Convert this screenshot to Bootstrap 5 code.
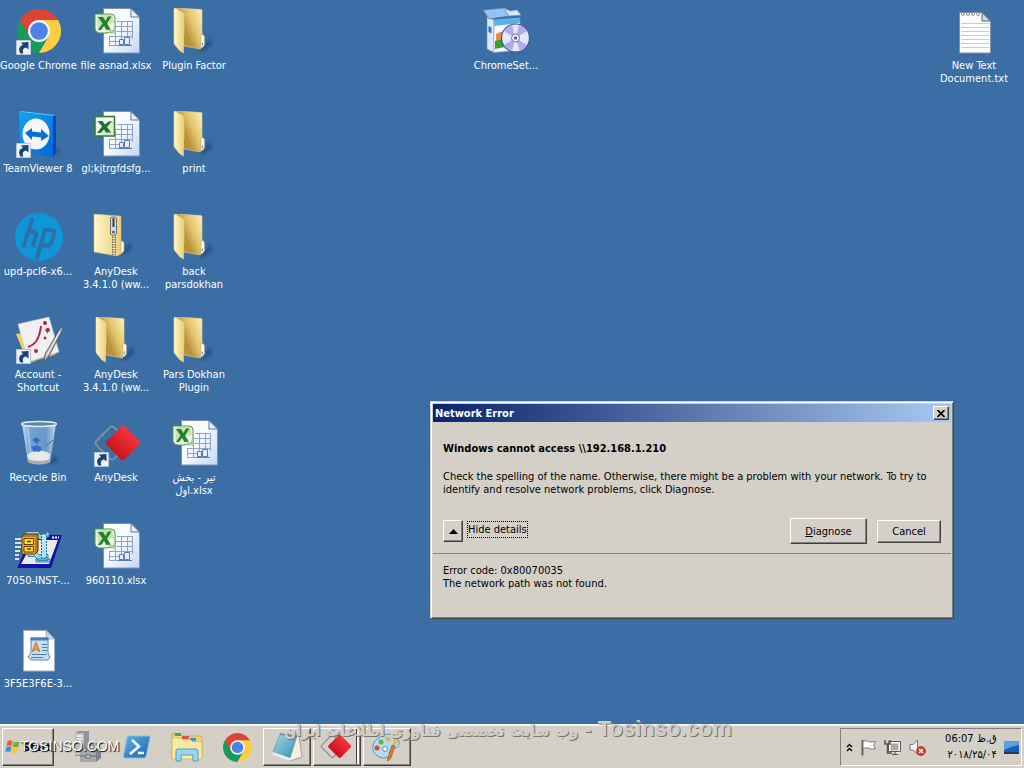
<!DOCTYPE html>
<html lang="en">
<head>
<meta charset="utf-8">
<meta name="viewport" content="width=device-width, initial-scale=1">
<title>Desktop</title>
<link href="https://cdn.jsdelivr.net/npm/bootstrap@5.3.0/dist/css/bootstrap.min.css" rel="stylesheet">
<style>
  :root { --face: #d4d0c8; --dark: #404040; --shade: #808080; }
  body { background: #3b6ea5; color: #000; font-family: "DejaVu Sans Condensed", "DejaVu Sans", sans-serif; font-size: 11px; line-height: 13px; }
  .desktop-area { min-height: 0; }
  .icon-grid { display: grid; grid-template-columns: repeat(13, 76px); grid-auto-rows: 103px; column-gap: 2px; }
  .shortcut { color: #fff; padding-top: 8px; gap: 3px; }
  .shortcut svg, .task svg { overflow: visible; flex: none; }
  .shortcut svg { width: 48px; height: 48px; }
  .shortcut span { max-width: 76px; }
  .c1 { grid-column: 1; } .c2 { grid-column: 2; } .c3 { grid-column: 3; } .c7 { grid-column: 7; } .c13 { grid-column: 13; }
  .r1 { grid-row: 1; } .r2 { grid-row: 2; } .r3 { grid-row: 3; } .r4 { grid-row: 4; } .r5 { grid-row: 5; } .r6 { grid-row: 6; } .r7 { grid-row: 7; }
  .raised { background: var(--face); color: #000; border: 1px solid; border-color: #fff var(--dark) var(--dark) #fff; border-radius: 0; box-shadow: inset -1px -1px 0 var(--shade); padding: 0; font-size: 11px; line-height: 13px; }
  .dialog-window { left: 430px; top: 401px; width: 524px; height: 218px; background: var(--face); border: 1px solid; border-color: var(--face) var(--dark) var(--dark) var(--face); box-shadow: inset 1px 1px 0 #fff, inset -1px -1px 0 var(--shade); padding: 2px; }
  .title-strip { height: 18px; background: linear-gradient(90deg, #0a246a, #a6caf0); color: #fff; padding: 0 2px; }
  .title-strip h1, .message h2 { font-size: 11px; line-height: 13px; }
  .close-btn { width: 16px; height: 14px; }
  .message { padding: 20px 10px 0; }
  .message h2 { margin-bottom: 15px; }
  .actions { height: 26px; margin-top: 22px; }
  .toggle-btn { width: 20px; height: 22px; }
  .link-btn { border: 1px dotted #000; background: none; padding: 0; line-height: 15px; }
  .diagnose { width: 77px; height: 26px; }
  .cancel { width: 64px; height: 23px; margin-left: 10px; }
  .details { border-top: 1px solid var(--shade); margin-top: 9px; padding: 10px; }
  .task-strip { height: 44px; background: var(--face); border-top: 2px solid #f4f2ee; padding: 2px; }
  .start-btn { width: 52px; height: 38px; gap: 2px; font-weight: bold; }
  .pinned { gap: 10px; margin-left: 13px; }
  .task { width: 40px; height: 38px; border: 0; background: none; padding: 0; }
  .running { gap: 2px; margin-left: 6px; }
  .running button { width: 48px; height: 38px; }
  .running .stacked { box-shadow: inset -1px -1px 0 var(--shade), inset -3px 0 0 #fff, inset -4px 0 0 var(--dark); padding-right: 4px; }
  .tray { width: 182px; height: 38px; border: 1px solid; border-color: var(--shade) #fff #fff var(--shade); padding: 0 2px 0 5px; }
  .clock { width: 64px; line-height: 16px; text-align: right; }
  .site-mark { left: 284px; top: -9px; font: bold 22px/24px "Liberation Sans", sans-serif; color: #cfcdc8; text-shadow: 1px 1px 0 #77756f; pointer-events: none; white-space: nowrap; }
  .site-mark bdi { font: bold 16px/24px "DejaVu Sans Condensed", sans-serif; }
  .corner-mark { left: 20px; top: 12px; font: 14px/16px "Liberation Sans", sans-serif; color: #fff; text-shadow: 1px 1px 1px #000; pointer-events: none; }
</style>
</head>
<body class="vh-100 overflow-hidden d-flex flex-column">

<svg width="0" height="0" class="position-absolute" aria-hidden="true">
  <defs>
    <linearGradient id="gFold" x1="0" x2="1"><stop offset="0" stop-color="#fff6c9"/><stop offset="1" stop-color="#e9d078"/></linearGradient>
    <linearGradient id="gBack" gradientUnits="userSpaceOnUse" x1="14" y1="20" x2="33" y2="12"><stop offset="0" stop-color="#b9913a"/><stop offset=".45" stop-color="#e3c46c"/><stop offset="1" stop-color="#f8e7a6"/></linearGradient>
    <linearGradient id="gPage" x1="0" y1="0" x2="1" y2="1"><stop offset="0" stop-color="#fff"/><stop offset=".5" stop-color="#f4f8ff"/><stop offset="1" stop-color="#c3d6f5"/></linearGradient>
    <linearGradient id="gTv" x1="0" x2="1" y2="1"><stop offset="0" stop-color="#12a5f5"/><stop offset="1" stop-color="#0465d8"/></linearGradient>
    <linearGradient id="gRed" y2="1" x2="0"><stop offset="0" stop-color="#f5343a"/><stop offset="1" stop-color="#c8141c"/></linearGradient>
    <linearGradient id="gPs" x2="1" y2="1"><stop offset="0" stop-color="#5fb0e8"/><stop offset="1" stop-color="#1766ae"/></linearGradient>
    <linearGradient id="gTeal" x2="1" y2="1"><stop offset="0" stop-color="#a5dbe8"/><stop offset="1" stop-color="#348fae"/></linearGradient>
    <linearGradient id="gBin" x2="1"><stop offset="0" stop-color="#d3e6f5"/><stop offset=".25" stop-color="#7ba9d6"/><stop offset=".7" stop-color="#6c9bcd"/><stop offset="1" stop-color="#cfe0ed"/></linearGradient>
    <filter id="soft"><feGaussianBlur stdDeviation="1.5"/></filter>

    <symbol id="arrow" viewBox="0 0 15 15"><path d="M.5.5h14v14H.5z" fill="#eef3fa" stroke="#b8c4d4"/><path d="M4.500 13.500C2 10 3 6 7 5L5 2.500 12.500 2v7.500L10 7.500C7 8 6 10.500 7.500 13.500z" fill="#1b4177"/></symbol>

    <symbol id="chrome" viewBox="0 0 44 44">
      <path d="M2.950 11A22 22 0 0 0 22 44L31.530 27.500 22 22z" fill="#139c5a"/>
      <path d="M41.050 11A22 22 0 0 1 22 44L31.530 27.500 22 11z" fill="#ffcd42"/>
      <path d="M2.950 11 12.500 27.500 22 22V11h19.050A22 22 0 0 0 2.950 11z" fill="#db4437"/>
      <circle cx="22" cy="22" r="11" fill="#f6f6f6"/><circle cx="22" cy="22" r="8.800" fill="#4b83e6"/>
    </symbol>

    <symbol id="folder" viewBox="0 0 48 48">
      <path d="M28 44 41 29l1 8-8 6z" fill="#173a66" opacity=".5" filter="url(#soft)"/>
      <path d="M6 0 31 1.500q1 0 1 1V37l-1.500 4L14 38z" fill="url(#gBack)" stroke="#e9d68f" stroke-width=".6"/>
      <path d="M31 26.500h2l1.500 2v8.500l-2 2.500h-2z" fill="#fbf8e6" stroke="#a99b66" stroke-width=".5"/><path d="M31.500 34.500h1.500v3h-1.500z" fill="#6fa7cf"/>
      <path d="M5 0 13 5q1 1 1 3V28l-.5 1V45L10 43 5 37q-1-1-1-2V1q0-1 1-1z" fill="url(#gFold)" stroke="#f1e09c" stroke-width=".5"/>
    </symbol>

    <symbol id="zip" viewBox="0 0 48 48">
      <path d="M24 42 38 28l2 6-8 7z" fill="#173a66" opacity=".5" filter="url(#soft)"/>
      <path d="M2 0 28 2q1 0 1 1V40l-4 2L2 38z" fill="url(#gFold)" stroke="#d9be69" stroke-width=".5"/>
      <path d="M29 27h1.500l1.500 2v8l-2 2.500h-1z" fill="#fbf8e6" stroke="#a99b66" stroke-width=".5"/>
      <path d="M22 20V41" stroke="#6f6850" stroke-width="4" stroke-dasharray="1.500 1"/><path d="M22 20V41" stroke="#f6eec2"/>
      <path d="M18.500 4q3-3 6 0v16q-3 3-6 0z" fill="#d8dde2" stroke="#697078"/><path d="M21.500 4v9" stroke="#333a42" stroke-width="2"/><circle cx="21.500" cy="18" r="1.500" fill="#59616a"/>
    </symbol>

    <symbol id="sheet" viewBox="0 0 48 48">
      <path d="M11.500.5H39L47.500 9V45H11.500z" fill="url(#gPage)" stroke="#7d92b5"/>
      <path d="M39 .5V9h8.500z" fill="#eaf1fb" stroke="#4d6a9a" stroke-width=".9"/>
      <path d="M25 13.500H41M22 18.500H41M18 23.500H41M17 28.500H41M17 33.500H32M17 37.500H31M29.500 13V37M35.500 13V28M40.500 13V31M23.500 20V37M17.500 28V37" fill="none" stroke="#8ba3cb"/>
      <path d="M27.500 31.500h4v5h-4zM32.500 29.500h5v7h-5z" fill="#e8effa" stroke="#5b7db3"/><path d="M26 37.500H40" stroke="#5b7db3"/>
    </symbol>
    <symbol id="excelNew" viewBox="0 0 48 48">
      <use href="#sheet"/>
      <path d="M3 6H19q4 0 4 4V25q-7-1-9 0H7q-4-1-4-4z" fill="#edf6e6" stroke="#519447"/>
      <path d="M5 8q7-2 15-1l2 8q-8 0-16 8z" fill="#c7e2b3"/>
      <path d="M6 9h5l2.500 4 2.500-4.500h3.500l-4.500 7 4 6.500h-4.500l-2.500-4-3 4H6l4.500-6.500z" fill="#24802a"/>
      <path d="M16 22h5v-3l4 4-4 3v-2h-4z" fill="#9bc48a" stroke="#fff" stroke-width=".5"/>
    </symbol>
    <symbol id="excelOld" viewBox="0 0 48 48">
      <use href="#sheet"/>
      <path d="M3 5.500h19.500V25H3z" fill="#d9ecd0" stroke="#3b7a35" stroke-width="1.500"/>
      <path d="M4.500 7h16.500v2L8 23.500H4.500z" fill="#f5faf2"/>
      <path d="M5.500 10h5l2.500 3.500 3.500-3 3.500-.5-5 6 4 5.500h-5l-2-3-3.500 3.500H5l5-6.500z" fill="#1f7228"/>
    </symbol>
    <symbol id="anydesk" viewBox="0 0 48 48">
      <rect x="7.500" y="10.500" width="25" height="25" rx="3" transform="rotate(45 20 23)" fill="none" stroke="#88919b" stroke-width="1.800"/>
      <rect x="18" y="10" width="26" height="26" rx="3" transform="rotate(45 31 23)" fill="url(#gRed)"/>
    </symbol>
  </defs>
</svg>

<main class="desktop-area flex-grow-1 position-relative">
  <nav class="icon-grid" aria-label="Desktop icons">
    <a href="#" class="shortcut c1 r1 d-flex flex-column align-items-center text-center text-decoration-none text-nowrap">
      <svg viewBox="0 0 48 48"><use href="#chrome" x="3" y="1" width="44" height="44"/><use href="#arrow" x="2" y="32" width="15" height="15"/></svg><span>Google Chrome</span></a>
    <a href="#" class="shortcut c2 r1 d-flex flex-column align-items-center text-center text-decoration-none text-nowrap">
      <svg viewBox="0 0 48 48"><use href="#excelNew"/></svg><span>file asnad.xlsx</span></a>
    <a href="#" class="shortcut c3 r1 d-flex flex-column align-items-center text-center text-decoration-none text-nowrap">
      <svg viewBox="0 0 48 48"><use href="#folder"/></svg><span>Plugin Factor</span></a>
    <a href="#" class="shortcut c7 r1 d-flex flex-column align-items-center text-center text-decoration-none text-nowrap">
      <svg viewBox="0 0 48 48">
        <path d="M5 9 12 12V44.500L5 41z" fill="#dfe8f6" stroke="#6a86b0" stroke-width=".6"/><path d="M12 12 38 10V42L12 44.500z" fill="#f8fafe" stroke="#8da5c8" stroke-width=".6"/>
        <path d="M12 12 38 10v5l-26 3z" fill="#56b4e6"/><path d="M6.500 18l3 1.500v6l-3-1.500z" fill="#2a6ed0"/><path d="M14 26l9-4v8l-9 3z" fill="#f08548"/><path d="M13 33l10-3v9l-10 2z" fill="#34a428"/>
        <path d="M1 2 22 0l5 8-20 3z" fill="#98c1f0" stroke="#4f7fbd" stroke-width=".7"/><path d="M22 0l5 8 12-1-4-5-7 1z" fill="#d9e7f9" stroke="#7d9cc5" stroke-width=".7"/>
        <circle cx="33.500" cy="30" r="14" fill="#e6e6f6" stroke="#45558c" stroke-width="1.200"/><path d="M33.500 30 22 23a13 13 0 0 1 8-6zM33.500 30 45 37a13 13 0 0 1-7 6zM33.500 30 37 17a13 13 0 0 1 8 6zM33.500 30 30 43a13 13 0 0 1-8-6z" fill="#b1abec"/>
        <circle cx="33.500" cy="30" r="4" fill="#f5f6fc" stroke="#6b75a9"/><circle cx="33.500" cy="30" r="1.800" fill="#56709a"/>
      </svg><span>ChromeSet...</span></a>
    <a href="#" class="shortcut c13 r1 d-flex flex-column align-items-center text-center text-decoration-none">
      <svg viewBox="0 0 48 48">
        <path d="M9.500 4.500H32L40.500 13V45H9.500z" fill="#fbfcfd" stroke="#8494a8"/><path d="M32 4.500V13h8.500z" fill="#cdd8e5" stroke="#4f6178"/>
        <path d="M11 15.500H39M11 19.500H39M11 23.500H39M11 27.500H39M11 31.500H39M11 35.500H39M11 39.500H39" stroke="#c3cedb"/>
        <g fill="#fff" stroke="#69788b" stroke-width=".8"><circle cx="13" cy="6" r="1.500"/><circle cx="18" cy="6" r="1.500"/><circle cx="23" cy="6" r="1.500"/><circle cx="28" cy="6" r="1.500"/></g>
      </svg><span>New Text Document.txt</span></a>

    <a href="#" class="shortcut c1 r2 d-flex flex-column align-items-center text-center text-decoration-none text-nowrap">
      <svg viewBox="0 0 48 48">
        <path d="M34 46 44 37l2 3-8 6z" fill="#173a66" opacity=".5" filter="url(#soft)"/>
        <path d="M5 1 8 0 42 4V42l-3 4z" fill="#0648b4"/><path d="M5 1 39 5V46L6 41z" fill="url(#gTv)"/><path d="M5 1 8 0 42 4l-3 1z" fill="#57c0fa"/>
        <ellipse cx="22" cy="23" rx="13.500" ry="15.500" fill="#f4f7fb"/>
        <path d="M11 22l7-5v3.500l9 1V18l8 7-8 5v-3.500l-9-1V29z" fill="#0b70d6"/><use href="#arrow" x="2" y="32" width="15" height="15"/>
      </svg><span>TeamViewer 8</span></a>
    <a href="#" class="shortcut c2 r2 d-flex flex-column align-items-center text-center text-decoration-none text-nowrap">
      <svg viewBox="0 0 48 48"><use href="#excelOld"/></svg><span>gl;kjtrgfdsfg...</span></a>
    <a href="#" class="shortcut c3 r2 d-flex flex-column align-items-center text-center text-decoration-none text-nowrap">
      <svg viewBox="0 0 48 48"><use href="#folder"/></svg><span>print</span></a>

    <a href="#" class="shortcut c1 r3 d-flex flex-column align-items-center text-center text-decoration-none text-nowrap">
      <svg viewBox="0 0 48 48"><circle cx="25" cy="23" r="24" fill="#0e96d8"/>
        <path d="M18.500 4 9.500 33M13 17.500h6q4 0 3 4L18.500 33M31.500 14 22.500 46M31 16h6q4 0 3 4l-2.500 8.500q-1 3-4 3h-6" fill="none" stroke="#2f6fa8" stroke-width="4"/></svg><span>upd-pcl6-x6...</span></a>
    <a href="#" class="shortcut c2 r3 d-flex flex-column align-items-center text-center text-decoration-none text-nowrap">
      <svg viewBox="0 0 48 48"><use href="#zip"/></svg><span>AnyDesk<br>3.4.1.0 (ww...</span></a>
    <a href="#" class="shortcut c3 r3 d-flex flex-column align-items-center text-center text-decoration-none">
      <svg viewBox="0 0 48 48"><use href="#folder"/></svg><span>back parsdokhan</span></a>

    <a href="#" class="shortcut c1 r4 d-flex flex-column align-items-center text-center text-decoration-none">
      <svg viewBox="0 0 48 48">
        <path d="M2 17 9 16 22 44l-8 2z" fill="#f0d44c"/><path d="M17 45 41 38l3-4-6-4z" fill="#d9a84a"/>
        <path d="M4 7 35 0 45 35 14 45z" fill="#f0eff2" stroke="#c2c0c8" stroke-width=".6"/>
        <path d="M14 30q11-3 13-21" fill="none" stroke="#b3253a" stroke-width="2"/><g fill="#b3253a"><circle cx="31" cy="6" r="2"/><circle cx="34" cy="13" r="2"/><circle cx="31" cy="21" r="1.500"/><circle cx="22" cy="34" r="2"/><path d="m31 13 2-2 1 6z"/></g>
        <path d="M47 10 49 12 35 39l-5 6 1-8z" fill="#b5b9be" stroke="#474b52" stroke-width=".8"/><path d="M46 14 33 38" stroke="#f7f8f9"/><use href="#arrow" x="2" y="32" width="15" height="15"/>
      </svg><span>Account - Shortcut</span></a>
    <a href="#" class="shortcut c2 r4 d-flex flex-column align-items-center text-center text-decoration-none text-nowrap">
      <svg viewBox="0 0 48 48"><use href="#folder"/></svg><span>AnyDesk<br>3.4.1.0 (ww...</span></a>
    <a href="#" class="shortcut c3 r4 d-flex flex-column align-items-center text-center text-decoration-none">
      <svg viewBox="0 0 48 48"><use href="#folder"/></svg><span>Pars Dokhan Plugin</span></a>

    <a href="#" class="shortcut c1 r5 d-flex flex-column align-items-center text-center text-decoration-none text-nowrap">
      <svg viewBox="0 0 48 48">
        <path d="M34 42 42 35l2 6-8 4z" fill="#173a66" opacity=".5" filter="url(#soft)"/>
        <path d="M8 4H42L36 42q-11 5-22 0z" fill="url(#gBin)" opacity=".9"/><path d="M13 35q5-5 11-3 6-3 12 2l-1 8q-10 4-20 0z" fill="#e9eae8"/><path d="M13.500 39q11 4 23 0L36 42.500q-11 4-22 0z" fill="#a9aeb0"/>
        <path d="m18 20 4-3 4 3-3 4zM17 27l6-2 1 5-4 2zM23 25l5 3-3 4-3-2z" fill="#2e6dd2"/><path d="M14 8 17 36" stroke="#cfe3f4" opacity=".7"/><path d="M32 26l7-6" stroke="#3d6a93"/>
        <ellipse cx="25" cy="4" rx="17.500" ry="2.500" fill="#5b87b0" stroke="#e3eaf0" stroke-width="1.500"/>
      </svg><span>Recycle Bin</span></a>
    <a href="#" class="shortcut c2 r5 d-flex flex-column align-items-center text-center text-decoration-none text-nowrap">
      <svg viewBox="0 0 48 48"><use href="#anydesk"/><use href="#arrow" x="2" y="32" width="15" height="15"/></svg><span>AnyDesk</span></a>
    <a href="#" class="shortcut c3 r5 d-flex flex-column align-items-center text-center text-decoration-none text-nowrap">
      <svg viewBox="0 0 48 48"><use href="#excelNew"/></svg><span dir="ltr">تیر - بخش<br>اول.xlsx</span></a>

    <a href="#" class="shortcut c1 r6 d-flex flex-column align-items-center text-center text-decoration-none text-nowrap">
      <svg viewBox="0 0 48 48">
        <path d="M1 16h7M1 20h7M1 24h6M1 28h5M1 32h4M1 36h4" stroke="#d3e4fb" stroke-width="2"/>
        <path d="M18 12H48L37 45H3z" fill="#1410a8"/><path d="M20 17H44L35 41H7z" fill="#ece9e6"/><path d="M38 14.500h7" stroke="#fff" stroke-width="2" stroke-dasharray="2 1"/>
        <path d="M12 8.500h12l2 3h6V9h3v5h-3v2h-8l-2-4H12zM14 28.500h8l3 3h9v6H24l-3-4h-7zM22 36h14v3H22z" fill="#8fd4f2" stroke="#1d6fa0" stroke-width=".8"/>
        <path d="M27.500 11h5v24h-5z" fill="#b9e3f5" stroke="#1d6fa0" stroke-dasharray="2 1"/>
        <path d="M8 14 11 11H24v17l-3 3H8z" fill="#c47a10" stroke="#5f3403"/><path d="M8.500 14H21v16.500H8.500z" fill="#f2a51e"/><path d="M10 15.500h9.500v6H10zM10 23.500h9.500v5.500H10z" fill="#ffdc38" stroke="#61400a"/><path d="M13 18.500h4M13 26h4" stroke="#5d3c07" stroke-width="1.500"/>
      </svg><span>7050-INST-...</span></a>
    <a href="#" class="shortcut c2 r6 d-flex flex-column align-items-center text-center text-decoration-none text-nowrap">
      <svg viewBox="0 0 48 48"><use href="#excelNew"/></svg><span>960110.xlsx</span></a>

    <a href="#" class="shortcut c1 r7 d-flex flex-column align-items-center text-center text-decoration-none text-nowrap">
      <svg viewBox="0 0 48 48">
        <path d="M9.500 4.500H32L40.500 13V45H9.500z" fill="#fff" stroke="#a4b0c0"/><path d="M32 4.500V13h8.500z" fill="#cbd7e4" stroke="#8fa3ba" stroke-width=".7"/>
        <path d="M17 12H34V27l2 4-2 3H17l-3-3 3-4z" fill="#c4e0f5" stroke="#5b86b1"/><path d="M16.500 11.500H34.500v3H16.500z" fill="#4a7fb3"/>
        <path d="M28 18.500h5M28 21.500h5M28 24.500h5M18 28.500h15M17 31.500h12" stroke="#4f7caf"/><path d="M18.500 26l3.500-8.500L25.500 26M20 23.500h4" fill="none" stroke="#e5802c" stroke-width="2"/>
      </svg><span>3F5E3F6E-3...</span></a>
  </nav>

  <section class="dialog-window position-absolute" role="dialog" aria-labelledby="dlgTitle">
    <header class="title-strip d-flex align-items-center justify-content-between">
      <h1 id="dlgTitle" class="m-0 fw-bold">Network Error</h1>
      <button type="button" class="close-btn raised d-flex align-items-center justify-content-center" aria-label="Close"><svg width="8" height="7" viewBox="0 0 8 7"><path d="M.5 0 7.500 7M7.500 0 .5 7" stroke="#000" stroke-width="1.700"/></svg></button>
    </header>
    <div class="message">
      <h2 class="fw-bold">Windows cannot access \\192.168.1.210</h2>
      <p class="m-0">Check the spelling of the name. Otherwise, there might be a problem with your network. To try to<br>identify and resolve network problems, click Diagnose.</p>
      <div class="actions d-flex align-items-center">
        <button type="button" class="toggle-btn raised d-flex align-items-center justify-content-center" aria-label="Collapse"><svg width="9" height="5" viewBox="0 0 9 5"><path d="M4.500 0 9 5H0z"/></svg></button>
        <button type="button" class="link-btn ms-1 mb-1">Hide details</button>
        <button type="button" class="diagnose raised ms-auto"><u>D</u>iagnose</button>
        <button type="button" class="cancel raised">Cancel</button>
      </div>
    </div>
    <div class="details">Error code: 0x80070035<br>The network path was not found.</div>
  </section>
</main>

<footer class="task-strip position-relative d-flex align-items-center flex-shrink-0">
  <button type="button" class="start-btn raised d-flex align-items-center justify-content-center">
    <svg width="16" height="16" viewBox="0 0 16 16"><path d="M2.500 2Q5 .5 7.500 2L6.500 7Q4 6 1.500 7z" fill="#e8622c"/><path d="M8.500 2.500Q11 4 14.500 2.500L13.500 7.500Q10.500 9 7.500 7.500z" fill="#6db33f"/><path d="M1.300 8Q4 7 6.300 8L5.300 13Q3 12 .3 13z" fill="#3b8ede"/><path d="M7.300 8.500Q10 10 13.300 8.500L12 13.500Q9 15 6.300 13.500z" fill="#f8c62d"/></svg>Start</button>

  <div class="pinned d-flex">
    <button type="button" class="task" aria-label="Server Manager"><svg width="32" height="32" viewBox="0 0 32 32">
      <path d="M4 2 8 0h10v23l-4 2H4z" fill="#8e9499"/><path d="M4 2h9v22H4z" fill="#b8bdc1"/><path d="M5.500 5h6M5.500 8h6M5.500 11h6" stroke="#f5f6f7" stroke-width="1.500"/>
      <path d="M9 20 14 17h16v10l-5 4H9z" fill="#7b8288"/><path d="M9 20h16v11H9z" fill="#a3aab0"/><path d="M9 25h16" stroke="#656b71"/><path d="M16 17v-3h7v3M15 24h4v3h-4z" fill="#dadddf" stroke="#666d73"/></svg></button>
    <button type="button" class="task" aria-label="PowerShell"><svg width="28" height="24" viewBox="0 0 28 24">
      <path d="M6 1H26q1.500 0 1 2L23 21q-.5 2-2 2H2q-2 0-1.500-2L4 3q.5-2 2-2z" fill="url(#gPs)" stroke="#8bbbe0"/><path d="M9 5l7 6.500L7 19M15 18h6" fill="none" stroke="#fff" stroke-width="2.500"/></svg></button>
    <button type="button" class="task" aria-label="Explorer"><svg width="32" height="30" viewBox="0 0 32 30">
      <path d="M1 2h8l2 2h18q2 0 2 2v20H1z" fill="#ecd57a" stroke="#c9ac50"/><path d="M4 1h6v3H4z" fill="#52a446"/><path d="M11 4h7v3h-7z" fill="#d9583c"/><path d="M19 6h6v3h-6z" fill="#478ed0"/>
      <path d="M1 6h9l2 2h8l2 2h9v17H1z" fill="#fae9a0" stroke="#d3b95c" stroke-width=".7"/><path d="M5 29V19q0-2 2-2h18q2 0 2 2v10h-5v-6H10v6z" fill="#9ed4f2" stroke="#4d9ccd"/></svg></button>
    <button type="button" class="task" aria-label="Google Chrome"><svg width="29" height="29"><use href="#chrome" width="29" height="29"/></svg></button>
  </div>

  <div class="running d-flex">
    <button type="button" class="raised task-open" aria-label="Notepad"><svg width="32" height="30" viewBox="0 0 32 30">
      <path d="M11 2 28 4 31 25 19 29z" fill="#f4eee3" stroke="#ab9f8e"/><path d="M9 2 26 4 19 26 2 20z" fill="url(#gTeal)" stroke="#4c93aa" stroke-width=".6"/><path d="M2 20 19 26l1 3L2 23z" fill="#e6f3f5"/><path d="M9 2 26 5" stroke="#54808e" stroke-width="2" stroke-dasharray="1 1"/></svg></button>
    <button type="button" class="raised stacked" aria-label="AnyDesk"><svg width="32" height="32" viewBox="0 0 48 48"><use href="#anydesk"/></svg></button>
    <button type="button" class="raised task-open" aria-label="Paint"><svg width="32" height="32" viewBox="0 0 32 32">
      <path d="M9 6Q20-1 27 8 31 16 22 18 17 20 19 24 15 29 8 26 0 21 2 14 3 9 9 6z" fill="#b6daf0" stroke="#5f93b8"/>
      <circle cx="10" cy="11" r="2.500" fill="#62b548"/><circle cx="17" cy="8" r="2.500" fill="#f0b339"/><circle cx="6" cy="17" r="2.500" fill="#d84734"/><circle cx="14" cy="18" r="2.500" fill="#e9f2f8" stroke="#668da8"/>
      <path d="M26 0 30 2 24 16l-3-1z" fill="#e9b35b"/><path d="M21 14l3 1-4 12q-2 3-4 3z" fill="#d97a2c" stroke="#93521d" stroke-width=".6"/></svg></button>
  </div>

  <div class="tray ms-auto d-flex align-items-center justify-content-between">
    <svg width="7" height="9" viewBox="0 0 7 9"><path d="M1 4 3.500 1.500 6 4M1 8 3.500 5.500 6 8" fill="none" stroke="#000" stroke-width="1.300"/></svg>
    <svg width="17" height="17" viewBox="0 0 17 17"><path d="M2.500 1v15.500" stroke="#666" stroke-width="2"/><path d="M3 2.500q3-2 5.500 0 2 1 7 0l-2 4 2 3q-4 1.500-6 0-3-1.500-6.500 0z" fill="#fff" stroke="#77756f"/></svg>
    <svg width="17" height="17" viewBox="0 0 17 17"><path d="M5.500 3.500h10v9h-10z" fill="#a9a9a7" stroke="#fff" stroke-width="2"/><path d="M4.500 2.500h12v10h-12zM8 15.500h6M11 13v2" fill="none" stroke="#555"/><path d="M1 1v4h5V1M3.500 5v9H8" fill="none" stroke="#555" stroke-width="1.500"/></svg>
    <svg width="17" height="17" viewBox="0 0 17 17"><path d="M1 5.500h3L8.500 1v14L4 11H1z" fill="#f7f7f7" stroke="#777"/><circle cx="12" cy="12" r="4.500" fill="#d93a30" stroke="#9c1d16" stroke-width=".6"/><path d="m10 10 4 4M14 10l-4 4" stroke="#fff" stroke-width="1.500"/></svg>
    <time class="clock" dir="ltr"><span>06:07 ق.ظ</span><br><span>۲۰۱۸/۲۵/۰۴</span></time>
    <svg width="15" height="13" viewBox="0 0 15 13"><path d="M0 0h15v11H0z" fill="#1d5dbb"/><path d="M0 0h15v4Q7 5 0 9z" fill="#5aa0e4"/><path d="M0 11h15v2H0z" fill="#243a58"/></svg>
  </div>

  <span class="corner-mark position-absolute">TOSINSO.COM</span>
  <span class="site-mark position-absolute" dir="rtl" lang="fa">Tosinso.com - <bdi>وب سایت تخصصی فناوری اطلاعات ایران</bdi></span>
</footer>

<script src="https://cdn.jsdelivr.net/npm/bootstrap@5.3.0/dist/js/bootstrap.bundle.min.js"></script>
</body>
</html>
